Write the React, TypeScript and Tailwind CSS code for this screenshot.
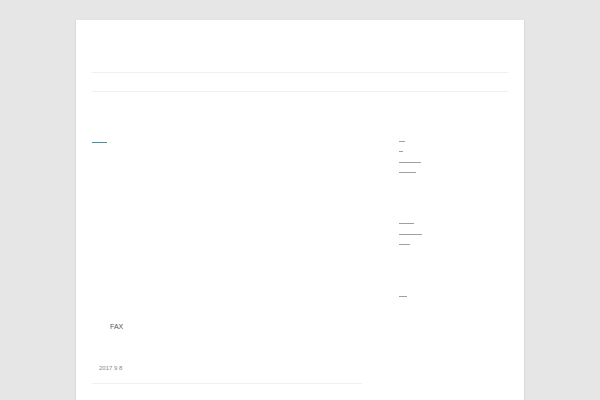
import React from "react";

const Bar = ({ w, mt, color = "bg-[#a0a0a0]" }: { w: string; mt: string; color?: string }) => (
  <div className={`h-px ${w} ${mt} ${color}`} />
);

export default function App() {
  return (
    <div className="min-h-[400px] w-[600px] bg-[#e6e6e6] pt-[20px] font-['Liberation_Sans',Arial,sans-serif]">
      <div className="mx-auto ml-[76px] h-[380px] w-[448px] bg-white px-[16px] pt-[52px] shadow-[0_1px_2px_rgba(100,100,100,0.25)]">
        <div className="h-px w-full bg-[#efefef]" />
        <div className="mt-[18px] h-px w-full bg-[#efefef]" />
        <div className="flex">
          <div className="w-[270px]">
            <div className="mt-[50px] h-px w-[15px] bg-[#4a8aa5]" />
            <div className="mt-[180px] pl-[18px] text-[7px] leading-[8px] text-[#555]">FAX</div>
            <div className="mt-[33px] pl-[7px] text-[6px] leading-[8px] text-[#888]">2017 9 8</div>
            <div className="mt-[11px] h-px w-full bg-[#f0f0f0]" />
          </div>
          <div className="ml-[37px] flex w-[108px] flex-col">
            <Bar w="w-[6px]" mt="mt-[49px]" />
            <Bar w="w-[4px]" mt="mt-[9px]" />
            <Bar w="w-[22px]" mt="mt-[10px]" />
            <Bar w="w-[17px]" mt="mt-[9px]" />
            <Bar w="w-[15px]" mt="mt-[50px]" />
            <Bar w="w-[23px]" mt="mt-[10px]" />
            <Bar w="w-[11px]" mt="mt-[9px]" />
            <Bar w="w-[8px]" mt="mt-[51px]" />
          </div>
        </div>
      </div>
    </div>
  );
}
